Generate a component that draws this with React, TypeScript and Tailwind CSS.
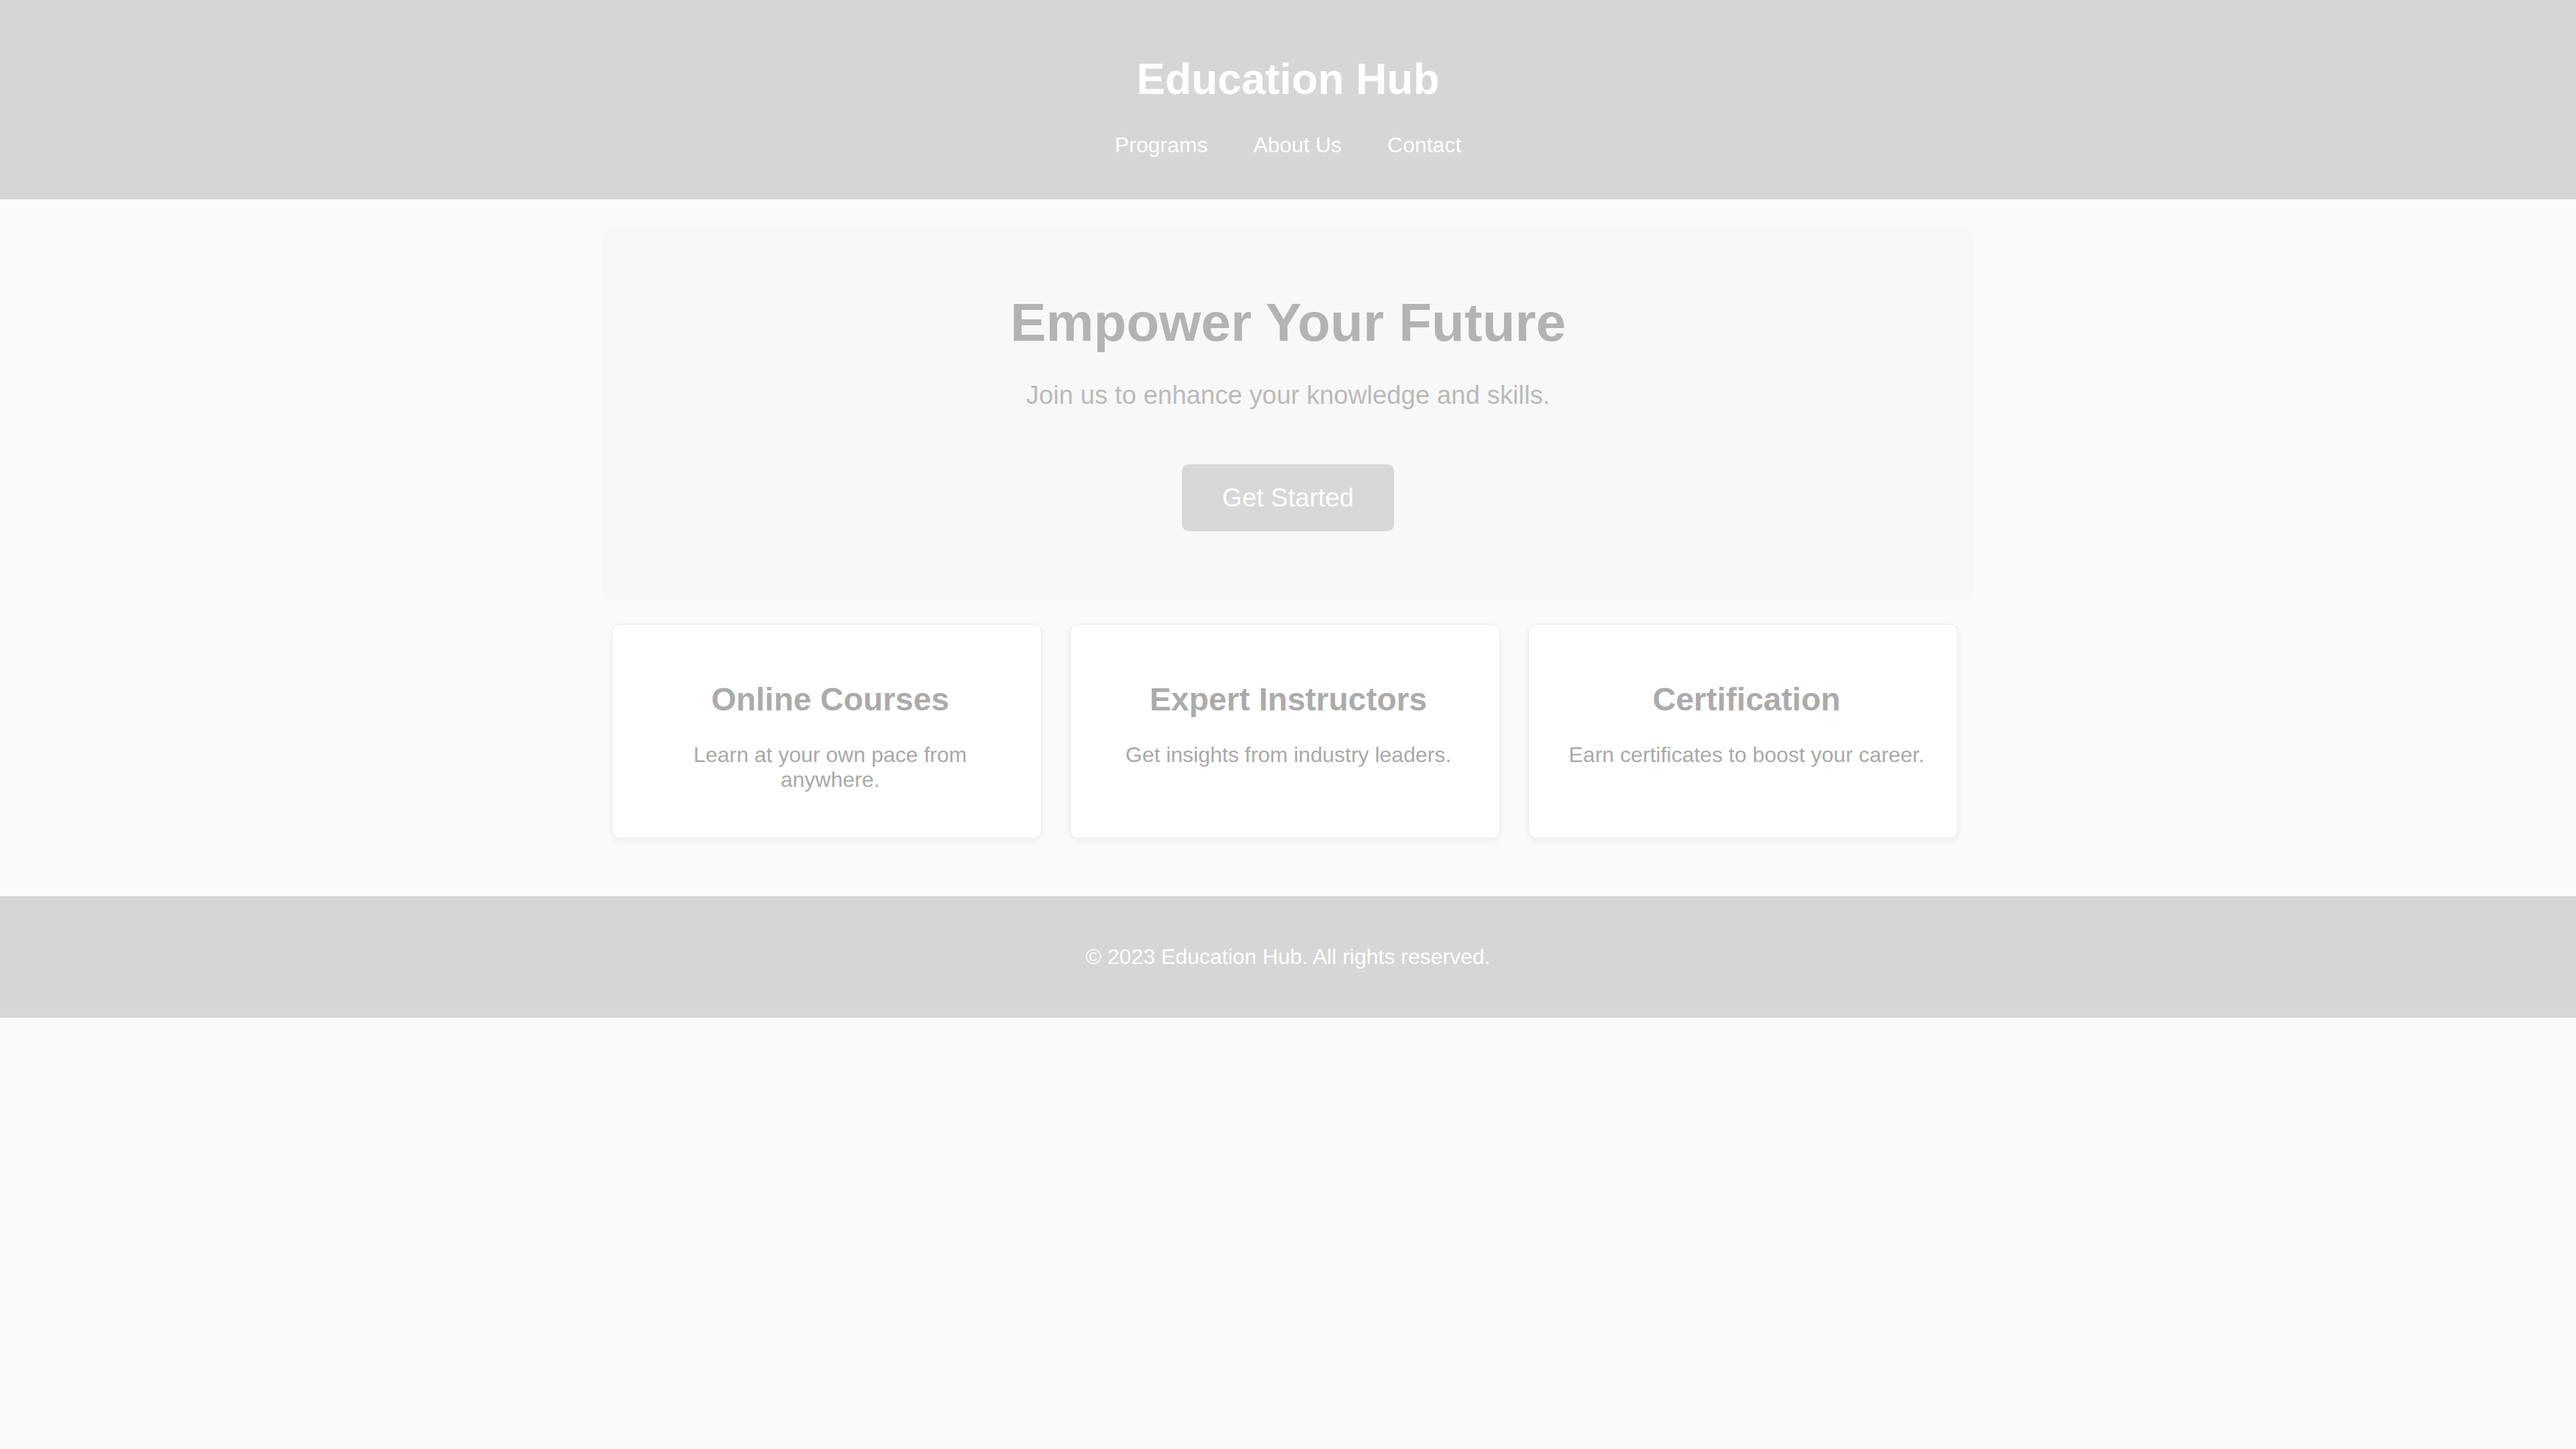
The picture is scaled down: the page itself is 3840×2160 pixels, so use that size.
import React from 'react';

interface Feature {
    title: string;
    text: string;
}

const features: Feature[] = [
    { title: 'Online Courses', text: 'Learn at your own pace from anywhere.' },
    { title: 'Expert Instructors', text: 'Get insights from industry leaders.' },
    { title: 'Certification', text: 'Earn certificates to boost your career.' },
];

const navLinks = ['Programs', 'About Us', 'Contact'];

export default function App() {
    return (
        <div className="min-h-screen bg-[#fafafa] font-['Liberation_Sans',Arial,sans-serif]">
            <header className="bg-[#d6d6d6] pt-[81px] pb-[62px] flex flex-col items-center">
                <h1 className="text-[64px] leading-[74px] font-bold text-white">Education Hub</h1>
                <nav className="mt-[43px] flex gap-[68px] text-[32px] leading-[37px] text-white">
                    {navLinks.map((link) => (
                        <a key={link} href="#" className="hover:underline">
                            {link}
                        </a>
                    ))}
                </nav>
            </header>

            <main className="w-[2046px] mx-auto pt-[41px] pb-[86px]">
                <section className="bg-[#f8f8f8] rounded-[20px] pt-[97px] pb-[102px] flex flex-col items-center">
                    <h2 className="text-[80px] leading-[92px] font-bold text-[#b3b3b3]">Empower Your Future</h2>
                    <p className="mt-[40px] text-[38.4px] leading-[44px] text-[#bababa]">
                        Join us to enhance your knowledge and skills.
                    </p>
                    <button className="mt-[81px] bg-[#d8d8d8] text-white text-[38.4px] leading-[44px] px-[60px] py-[28px] rounded-[10px]">
                        Get Started
                    </button>
                </section>

                <div className="ml-[15px] w-[2007px] mt-[36px] grid grid-cols-3 gap-[42px]">
                    {features.map((f) => (
                        <div
                            key={f.title}
                            className="bg-white border border-[#ebebeb] rounded-[12px] shadow-[0_3px_8px_rgba(0,0,0,0.06)] pt-[84px] pb-[68px] pl-[55px] pr-[45px] text-center"
                        >
                            <h3 className="text-[48px] leading-[55px] font-bold text-[#ababab]">{f.title}</h3>
                            <p className="mt-[37px] text-[32px] leading-[37px] text-[#a9a9a9]">{f.text}</p>
                        </div>
                    ))}
                </div>
            </main>

            <footer className="bg-[#d6d6d6] pt-[72px] pb-[72px] text-center">
                <p className="text-[32px] leading-[37px] text-white">© 2023 Education Hub. All rights reserved.</p>
            </footer>
        </div>
    );
}
